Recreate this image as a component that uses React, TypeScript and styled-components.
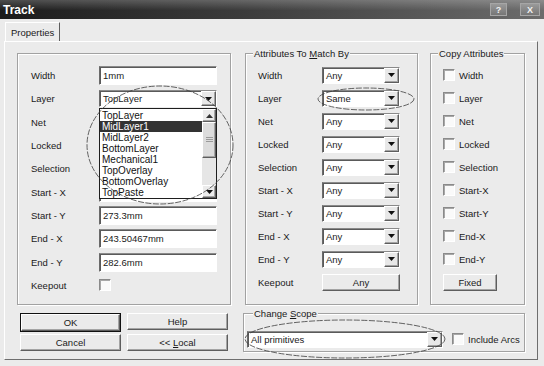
import React, { FunctionComponent } from 'react';
import styled, { createGlobalStyle, css } from 'styled-components';

const GlobalStyle = createGlobalStyle`
    html, body {
        margin: 0;
        padding: 0;
        background: #ebebeb;
    }

    body {
        font-family: 'Liberation Sans', Arial, sans-serif;
    }
`;

const etched = css`
    border: 1px solid #a2a2a2;
    box-shadow: inset 1px 1px 0 #fff, 1px 1px 0 #fff;
`;

const sunken = css`
    border: 1px solid;
    border-color: #8a8a8a #fff #fff #6a6a6a;
    box-shadow: inset 1px 1px 0 #5a5a5a;
    background: #fff;
`;

const raised = css`
    border: 1px solid;
    border-color: #fff #5e5e5e #5e5e5e #fff;
    box-shadow: inset -1px -1px 0 #a4a4a4;
    background: #ebebeb;
`;

const StyledWindow = styled.div`
    position: relative;
    width: 544px;
    height: 366px;
    overflow: hidden;
    background: #ebebeb;
    color: #1a1a1a;
    font-size: 9.5px;
`;

const StyledTitleBar = styled.div`
    display: flex;
    align-items: center;
    height: 19px;
    padding: 0 4px 0 3px;
    box-sizing: border-box;
    background:
        linear-gradient(to bottom, rgba(255, 255, 255, 0.22), rgba(255, 255, 255, 0) 55%),
        linear-gradient(to right, #1b1b1b, #3c3c3c 45%, #6c6c6c);
`;

const StyledTitle = styled.div`
    flex: 1;
    color: #fff;
    font-size: 12px;
    font-weight: bold;
`;

const StyledTitleButton = styled.div<{ $wide?: boolean }>`
    display: flex;
    align-items: center;
    justify-content: center;
    width: ${({ $wide }) => ($wide ? 20 : 17)}px;
    height: 13px;
    margin-left: ${({ $wide }) => ($wide ? 13 : 0)}px;
    box-sizing: border-box;
    border: 1px solid #a6a6a6;
    background: linear-gradient(to bottom, #9a9a9a, #767676);
    color: #f2f2f2;
    font-size: 9px;
    font-weight: bold;
`;

const StyledBody = styled.div`
    padding: 3px 6px 0 4px;
`;

const StyledTabStrip = styled.div`
    display: flex;
    height: 19px;
    padding-left: 1px;
`;

const StyledTab = styled.div`
    display: flex;
    align-items: center;
    height: 19px;
    padding: 1px 5px 0 5px;
    box-sizing: border-box;
    border-top: 1px solid #fff;
    border-left: 1px solid #fff;
    border-right: 1px solid #5e5e5e;
`;

const StyledTabPage = styled.div`
    height: 319px;
    padding: 11px 0 0 12px;
    box-sizing: border-box;
    border: 1px solid;
    border-color: #fff #6e6e6e #6e6e6e #fff;
`;

const StyledTopRow = styled.div`
    display: flex;
    align-items: flex-start;
`;

const StyledPropertyPanel = styled.div`
    ${etched};
    position: relative;
    display: grid;
    grid-template-columns: 68px 118px;
    grid-auto-rows: 23.3px;
    align-items: center;
    width: 214px;
    height: 252px;
    padding: 10px 0 0 13px;
    box-sizing: border-box;
`;

const StyledGroup = styled.div<{ $width: number; $gap: number }>`
    ${etched};
    position: relative;
    width: ${({ $width }) => $width}px;
    height: 252px;
    margin-left: ${({ $gap }) => $gap}px;
    padding: 9.5px 0 0 12px;
    box-sizing: border-box;
`;

const StyledMatchGrid = styled.div`
    display: grid;
    grid-template-columns: 64px 78px;
    grid-auto-rows: 23px;
    align-items: center;
`;

const StyledCopyList = styled.div`
    display: grid;
    grid-auto-rows: 23px;
    align-items: center;
`;

const StyledCaption = styled.div<{ $left: number }>`
    position: absolute;
    top: -6px;
    left: ${({ $left }) => $left}px;
    padding: 0 1px;
    line-height: 11px;
    background: #ebebeb;
    white-space: nowrap;
`;

const StyledLabel = styled.div`
    white-space: nowrap;
`;

const StyledTextBox = styled.div`
    ${sunken};
    display: flex;
    align-items: center;
    height: 19px;
    padding-left: 3px;
    box-sizing: border-box;
    white-space: nowrap;
`;

const StyledCombo = styled.div<{ $width?: number }>`
    ${sunken};
    display: flex;
    align-items: center;
    width: ${({ $width }) => ($width ? `${$width}px` : 'auto')};
    height: 17px;
    padding-left: 3px;
    box-sizing: border-box;
`;

const StyledComboText = styled.div`
    flex: 1;
    white-space: nowrap;
`;

const StyledComboButton = styled.div`
    ${raised};
    display: flex;
    align-items: center;
    justify-content: center;
    width: 15px;
    height: 15px;
    box-sizing: border-box;
    background: #e8e8e8;
`;

const StyledCheckbox = styled.div`
    ${sunken};
    width: 12px;
    height: 12px;
    box-sizing: border-box;
    border-color: #8a8a8a #fff #fff #8a8a8a;
    box-shadow: inset 1px 1px 0 #a8a8a8;
    background: #fafafa;
`;

const StyledCheckRow = styled.div`
    display: flex;
    align-items: center;
    gap: 4px;
    white-space: nowrap;
`;

const StyledPushButton = styled.div<{ $width?: number; $default?: boolean }>`
    ${raised};
    display: flex;
    align-items: center;
    justify-content: center;
    width: ${({ $width }) => ($width ? `${$width}px` : 'auto')};
    height: ${({ $default }) => ($default ? 19 : 17)}px;
    box-sizing: border-box;
    white-space: pre;

    ${({ $default }) => $default && css`
        outline: 1px solid #111;
        outline-offset: -1px;
        border-width: 2px;
    `}
`;

const StyledDropList = styled.div`
    position: absolute;
    top: 54px;
    left: 81px;
    display: flex;
    width: 118px;
    height: 91px;
    box-sizing: border-box;
    border: 1px solid #1e1e1e;
    background: #fff;
    z-index: 2;
`;

const StyledItems = styled.div`
    flex: 1;
    padding-top: 1px;
`;

const StyledItem = styled.div<{ $selected?: boolean }>`
    height: 11px;
    line-height: 11px;
    padding-left: 2px;
    font-size: 10px;
    white-space: nowrap;
    background: ${({ $selected }) => ($selected ? '#333' : 'transparent')};
    color: ${({ $selected }) => ($selected ? '#fff' : '#111')};
`;

const StyledScrollBar = styled.div`
    display: flex;
    flex-direction: column;
    width: 14px;
    background: #e6e6e6;
`;

const StyledScrollArrow = styled.div`
    ${raised};
    display: flex;
    align-items: center;
    justify-content: center;
    height: 13px;
    box-sizing: border-box;
`;

const StyledThumb = styled.div`
    ${raised};
    display: flex;
    align-items: center;
    justify-content: center;
    height: 36px;
    box-sizing: border-box;
    background: #dcdcdc;
`;

const StyledTrack = styled.div`
    flex: 1;
`;

const StyledBottomRow = styled.div`
    display: flex;
    align-items: flex-start;
    margin-top: 8px;
`;

const StyledButtonGrid = styled.div`
    display: grid;
    grid-template-columns: 101px 101px;
    grid-auto-rows: 19px;
    column-gap: 6px;
    row-gap: 2px;
    margin-left: 3px;
`;

const StyledScopeGroup = styled.div`
    ${etched};
    position: relative;
    display: flex;
    align-items: center;
    width: 282px;
    height: 39px;
    margin-left: 15px;
    padding: 13px 0 0 3px;
    box-sizing: border-box;
`;

const StyledScopeCheck = styled(StyledCheckRow)`
    margin-left: 9px;
`;

const StyledMarks = styled.svg`
    position: absolute;
    top: 0;
    left: 0;
    pointer-events: none;
    z-index: 5;
`;

const DownArrow: FunctionComponent = () => (
    <svg width="7" height="4" viewBox="0 0 7 4">
        <polygon points="0,0 7,0 3.5,4" fill="#111" />
    </svg>
);

const UpArrow: FunctionComponent = () => (
    <svg width="7" height="4" viewBox="0 0 7 4">
        <polygon points="0,4 7,4 3.5,0" fill="#333" />
    </svg>
);

const Grip: FunctionComponent = () => (
    <svg width="7" height="6" viewBox="0 0 7 6">
        <path d="M0 0.5H7M0 2.5H7M0 4.5H7" stroke="#9a9a9a" strokeWidth="1" />
    </svg>
);

interface ICombo {
    readonly value?: string;
    readonly width?: number;
}

const Combo: FunctionComponent<ICombo> = ({ value, width }) => (
    <StyledCombo $width={width}>
        <StyledComboText>{value}</StyledComboText>
        <StyledComboButton>
            <DownArrow />
        </StyledComboButton>
    </StyledCombo>
);

const LAYERS = [
    'TopLayer',
    'MidLayer1',
    'MidLayer2',
    'BottomLayer',
    'Mechanical1',
    'TopOverlay',
    'BottomOverlay',
    'TopPaste'
];

const MATCH_ROWS = [
    { label: 'Width', value: 'Any' },
    { label: 'Layer', value: 'Same' },
    { label: 'Net', value: 'Any' },
    { label: 'Locked', value: 'Any' },
    { label: 'Selection', value: 'Any' },
    { label: 'Start - X', value: 'Any' },
    { label: 'Start - Y', value: 'Any' },
    { label: 'End - X', value: 'Any' },
    { label: 'End - Y', value: 'Any' }
];

const COPY_ROWS = [
    'Width',
    'Layer',
    'Net',
    'Locked',
    'Selection',
    'Start-X',
    'Start-Y',
    'End-X',
    'End-Y'
];

const App: FunctionComponent = () => {
    return (
        <StyledWindow>
            <GlobalStyle />
            <StyledTitleBar>
                <StyledTitle>Track</StyledTitle>
                <StyledTitleButton>?</StyledTitleButton>
                <StyledTitleButton $wide>X</StyledTitleButton>
            </StyledTitleBar>
            <StyledBody>
                <StyledTabStrip>
                    <StyledTab>Properties</StyledTab>
                </StyledTabStrip>
                <StyledTabPage>
                    <StyledTopRow>
                        <StyledPropertyPanel>
                            <StyledLabel>Width</StyledLabel>
                            <StyledTextBox>1mm</StyledTextBox>
                            <StyledLabel>Layer</StyledLabel>
                            <Combo value="TopLayer" />
                            <StyledLabel>Net</StyledLabel>
                            <Combo />
                            <StyledLabel>Locked</StyledLabel>
                            <StyledCheckbox />
                            <StyledLabel>Selection</StyledLabel>
                            <StyledCheckbox />
                            <StyledLabel>Start - X</StyledLabel>
                            <StyledTextBox />
                            <StyledLabel>Start - Y</StyledLabel>
                            <StyledTextBox>273.3mm</StyledTextBox>
                            <StyledLabel>End - X</StyledLabel>
                            <StyledTextBox>243.50467mm</StyledTextBox>
                            <StyledLabel>End - Y</StyledLabel>
                            <StyledTextBox>282.6mm</StyledTextBox>
                            <StyledLabel>Keepout</StyledLabel>
                            <StyledCheckbox />

                            <StyledDropList>
                                <StyledItems>
                                    {
                                        LAYERS.map((layer) => (
                                            <StyledItem key={layer} $selected={layer === 'MidLayer1'}>
                                                {layer}
                                            </StyledItem>
                                        ))
                                    }
                                </StyledItems>
                                <StyledScrollBar>
                                    <StyledScrollArrow><UpArrow /></StyledScrollArrow>
                                    <StyledThumb><Grip /></StyledThumb>
                                    <StyledTrack />
                                    <StyledScrollArrow><DownArrow /></StyledScrollArrow>
                                </StyledScrollBar>
                            </StyledDropList>
                        </StyledPropertyPanel>

                        <StyledGroup $width={173} $gap={14}>
                            <StyledCaption $left={7}>
                                Attributes To <u>M</u>atch By
                            </StyledCaption>
                            <StyledMatchGrid>
                                {
                                    MATCH_ROWS.map(({ label, value }) => (
                                        <React.Fragment key={label}>
                                            <StyledLabel>{label}</StyledLabel>
                                            <Combo value={value} />
                                        </React.Fragment>
                                    ))
                                }
                                <StyledLabel>Keepout</StyledLabel>
                                <StyledPushButton>Any</StyledPushButton>
                            </StyledMatchGrid>
                        </StyledGroup>

                        <StyledGroup $width={95} $gap={12}>
                            <StyledCaption $left={7}>Copy Attributes</StyledCaption>
                            <StyledCopyList>
                                {
                                    COPY_ROWS.map((label) => (
                                        <StyledCheckRow key={label}>
                                            <StyledCheckbox />
                                            {label}
                                        </StyledCheckRow>
                                    ))
                                }
                                <StyledPushButton $width={54}>Fixed</StyledPushButton>
                            </StyledCopyList>
                        </StyledGroup>
                    </StyledTopRow>

                    <StyledBottomRow>
                        <StyledButtonGrid>
                            <StyledPushButton $default>OK</StyledPushButton>
                            <StyledPushButton>Help</StyledPushButton>
                            <StyledPushButton>Cancel</StyledPushButton>
                            <StyledPushButton>{'<< '}<u>L</u>ocal</StyledPushButton>
                        </StyledButtonGrid>

                        <StyledScopeGroup>
                            <StyledCaption $left={9}>
                                Change <u>S</u>cope
                            </StyledCaption>
                            <Combo value="All primitives" width={196} />
                            <StyledScopeCheck>
                                <StyledCheckbox />
                                Include Arcs
                            </StyledScopeCheck>
                        </StyledScopeGroup>
                    </StyledBottomRow>
                </StyledTabPage>
            </StyledBody>

            <StyledMarks width="544" height="366" viewBox="0 0 544 366">
                <g fill="none" stroke="#3e3e3e" strokeWidth="0.8" strokeDasharray="6 1.5">
                    <ellipse cx="160" cy="145" rx="73" ry="59" />
                    <ellipse cx="366" cy="99" rx="48" ry="11" />
                    <ellipse cx="345" cy="339" rx="100" ry="19" />
                </g>
            </StyledMarks>
        </StyledWindow>
    );
};

export default App;
